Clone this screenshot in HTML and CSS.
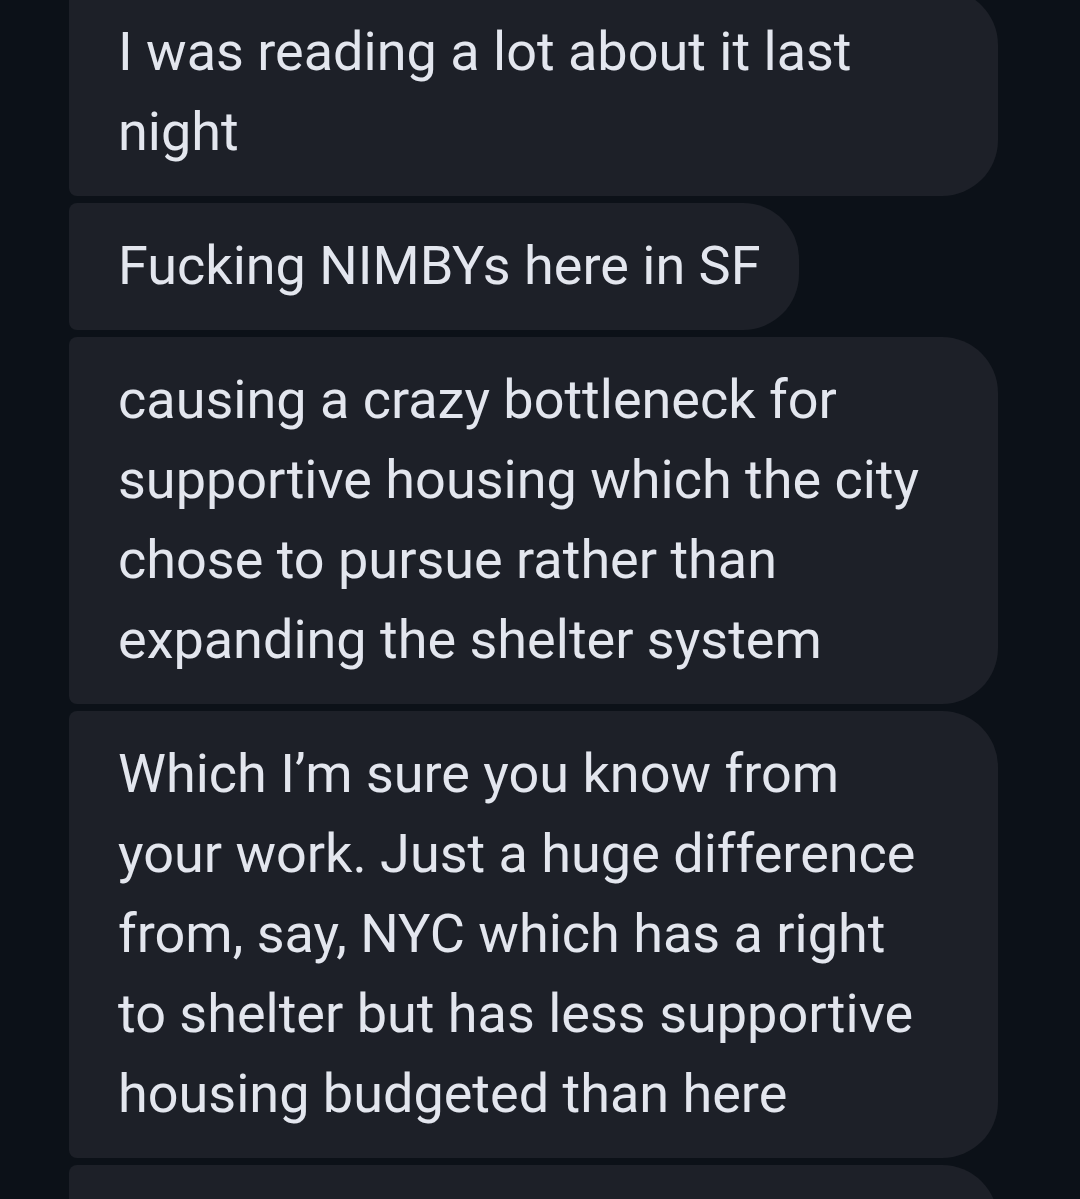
FILE: index.html
```html
<!DOCTYPE html>
<html>
<head>
<meta charset="utf-8">
<link rel="stylesheet" href="styles.css">
</head>
<body>
<div class="screen">
  <div class="thread">
    <div class="bubble wide">I was reading a lot about it last night</div>
    <div class="bubble">Fucking NIMBYs here in SF</div>
    <div class="bubble wide">causing a crazy bottleneck for supportive housing which the city chose to pursue rather than expanding the shelter system</div>
    <div class="bubble wide">Which I’m sure you know from your work. Just a huge difference from, say, NYC which has a right to shelter but has less supportive housing budgeted than here</div>
    <div class="bubble wide">&nbsp;</div>
  </div>
</div>
</body>
</html>
```
FILE: styles.css
```css
html, body {
  margin: 0;
  padding: 0;
  background: #0c1118;
  overflow: hidden;
}
.screen {
  width: 1080px;
  height: 1199px;
  overflow: hidden;
  background: #0c1118;
}
.thread {
  display: flex;
  flex-direction: column;
  align-items: flex-start;
  gap: 7px;
  padding-left: 69px;
  margin-top: -11px;
}
.bubble {
  box-sizing: border-box;
  max-width: 929px;
  padding: 23px 38px 24px 49px;
  background: #1d2028;
  color: #e3e6ee;
  font-family: Roboto, "Noto Sans", sans-serif;
  font-size: 54px;
  line-height: 80px;
  border-radius: 8px 56px 56px 8px;
}
.bubble.wide {
  width: 929px;
  padding-right: 66px;
}
```
